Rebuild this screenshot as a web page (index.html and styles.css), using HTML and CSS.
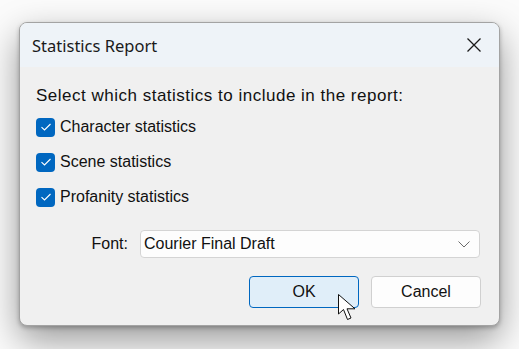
FILE: index.html
```html
<!DOCTYPE html>
<html lang="en">
<head>
    <meta charset="UTF-8">
    <meta name="viewport" content="width=device-width, initial-scale=1.0">
    <title>Statistics Report</title>
    <link rel="stylesheet" href="styles.css">
</head>
<body>
    <div class="dialog">
        <div class="titlebar">
            <span class="title">Statistics Report</span>
            <span class="close">
                <svg width="16" height="16" viewBox="0 0 16 16">
                    <path d="M1.5 1.5 L14.5 14.5 M14.5 1.5 L1.5 14.5" stroke="#1a1a1a" stroke-width="1.3" fill="none"/>
                </svg>
            </span>
        </div>
        <div class="content">
            <p class="intro">Select which statistics to include in the report:</p>

            <div class="options">
                <label class="check">
                    <span class="box">
                        <svg width="12" height="10" viewBox="0 0 12 10"><path d="M1.5 5.2 L4.5 8 L10.5 2" stroke="#fff" stroke-width="1.1" fill="none"/></svg>
                    </span>
                    Character statistics
                </label>
                <label class="check">
                    <span class="box">
                        <svg width="12" height="10" viewBox="0 0 12 10"><path d="M1.5 5.2 L4.5 8 L10.5 2" stroke="#fff" stroke-width="1.1" fill="none"/></svg>
                    </span>
                    Scene statistics
                </label>
                <label class="check">
                    <span class="box">
                        <svg width="12" height="10" viewBox="0 0 12 10"><path d="M1.5 5.2 L4.5 8 L10.5 2" stroke="#fff" stroke-width="1.1" fill="none"/></svg>
                    </span>
                    Profanity statistics
                </label>
            </div>

            <div class="font-row">
                <span class="font-label">Font:</span>
                <div class="combo">
                    <span>Courier Final Draft</span>
                    <svg width="12" height="7" viewBox="0 0 12 7"><path d="M0.5 0.5 L6 6 L11.5 0.5" stroke="#6b6b6b" stroke-width="1" fill="none"/></svg>
                </div>
            </div>

            <div class="buttons">
                <button class="btn primary" type="button">OK</button>
                <button class="btn" type="button">Cancel</button>
            </div>
        </div>
    </div>

    <svg class="cursor" width="22" height="28" viewBox="0 0 22 28">
        <path d="M0.5 0.5 L0.5 20 L5.5 15.5 L9.5 25.5 L13 24 L9 14.8 L17 14.8 Z" fill="#fff" stroke="#111" stroke-width="1" stroke-linejoin="miter"/>
    </svg>
</body>
</html>
```

FILE: styles.css
```css
body {
    margin: 0;
    padding: 22px 0 0 19px;
    background-color: #fbfbfb;
    font-family: "Liberation Sans", Arial, sans-serif;
    color: #111;
    height: 349px;
    box-sizing: border-box;
    overflow: hidden;
}
.dialog {
    width: 481px;
    height: 304px;
    box-sizing: border-box;
    border: 1px solid #a3a3a3;
    border-radius: 8px;
    overflow: hidden;
    background: #f0f0f0;
    box-shadow: 0 2px 4px rgba(0, 0, 0, 0.25), 0 14px 36px rgba(0, 0, 0, 0.4);
}
.titlebar {
    height: 44px;
    background: #eef3f8;
    display: flex;
    align-items: center;
    justify-content: space-between;
    padding: 0 17px 0 12px;
}
.title {
    font-family: "Noto Sans", sans-serif;
    font-size: 16.5px;
    color: #1a1a1a;
}
.close {
    display: flex;
}
.content {
    padding: 19px 19px 0 16px;
}
.intro {
    margin: 0;
    font-size: 17px;
    line-height: 19px;
    letter-spacing: 0.5px;
}
.options {
    display: flex;
    flex-direction: column;
    gap: 15px;
    margin-top: 12px;
}
.check {
    display: flex;
    align-items: center;
    gap: 5px;
    height: 20px;
    font-size: 16px;
}
.box {
    width: 19px;
    height: 19px;
    border-radius: 4px;
    background: #0067c0;
    display: flex;
    align-items: center;
    justify-content: center;
}
.font-row {
    display: flex;
    justify-content: flex-end;
    align-items: center;
    gap: 12px;
    margin-top: 23px;
    font-size: 16px;
}
.combo {
    width: 340px;
    height: 28px;
    box-sizing: border-box;
    background: #fdfdfd;
    border: 1px solid #d4d4d4;
    border-radius: 4px;
    display: flex;
    align-items: center;
    justify-content: space-between;
    padding: 0 9px 0 3px;
}
.buttons {
    display: flex;
    justify-content: flex-end;
    gap: 12px;
    margin-top: 18px;
    margin-right: -1px;
}
.btn {
    width: 110px;
    height: 32px;
    font-family: "Liberation Sans", Arial, sans-serif;
    font-size: 16px;
    color: #111;
    background: #fdfdfd;
    border: 1px solid #d0d0d0;
    border-radius: 4px;
}
.btn.primary {
    background: #e0eef9;
    border-color: #0067c0;
}
.cursor {
    position: absolute;
    left: 338px;
    top: 294px;
}
```
